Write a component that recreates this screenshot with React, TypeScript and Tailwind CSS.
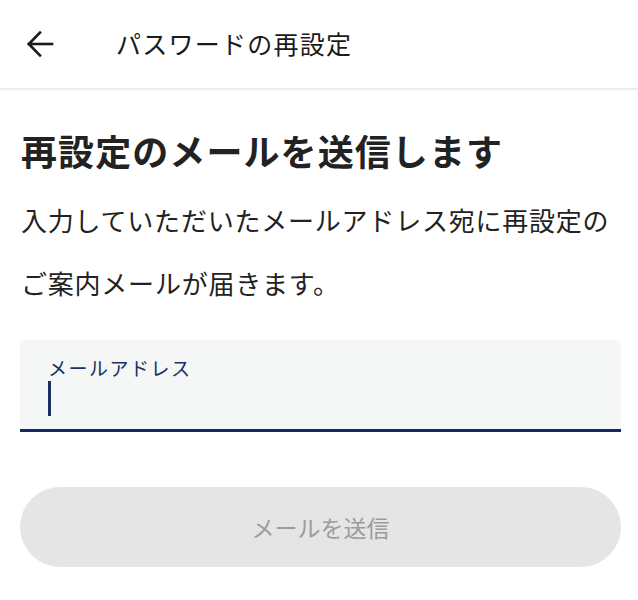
const font = {
  fontFamily: '"Noto Sans CJK JP", "Noto Sans", sans-serif',
};

function BackArrow() {
  return (
    <svg width="28" height="28" viewBox="0 0 28 28" fill="none" stroke="#1a1a1a" strokeWidth="2.6" strokeLinecap="square">
      <path d="M26 14H3" />
      <path d="M14 2.5 2.8 14 14 25.5" strokeLinejoin="miter" />
    </svg>
  );
}

export default function App() {
  return (
    <div className="min-h-screen bg-white text-[#222222]" style={font}>
      {/* Header */}
      <header className="h-[88px] flex items-center bg-white shadow-[0_1px_3px_rgba(0,0,0,0.14)]">
        <button className="ml-[26px] w-[28px] h-[28px] flex items-center justify-center">
          <BackArrow />
        </button>
        <h1 className="ml-[62px] text-[25px] tracking-[0.05em] text-[#1a1a1a]">パスワードの再設定</h1>
      </header>

      {/* Content */}
      <main className="pl-[20px] pr-[17px]">
        <h2 className="mt-[37px] pl-[1px] text-[36px] leading-[51px] font-bold tracking-[0.03em] text-[#222222]">
          再設定のメールを送信します
        </h2>
        <p className="mt-[12px] pl-[1px] text-[26px] leading-[63px] tracking-[0.03em] text-[#222222]">
          入力していただいたメールアドレス宛に再設定のご案内メールが届きます。
        </p>

        <div className="mt-[26px] h-[92px] rounded-t-[6px] bg-[#f5f7f7] border-b-[3px] border-[#0f2a66] px-[28px] pt-[16px]">
          <div className="text-[19px] leading-[24px] tracking-[0.08em] text-[#1b3060]">メールアドレス</div>
          <div className="mt-[1px] w-[3px] h-[35px] bg-[#1b3060]" />
        </div>

        <button
          disabled
          className="mt-[55px] w-full h-[80px] rounded-full bg-[#e5e5e5] text-[#9c9c9c] text-[23px] flex items-center justify-center"
        >
          メールを送信
        </button>
      </main>
    </div>
  );
}
